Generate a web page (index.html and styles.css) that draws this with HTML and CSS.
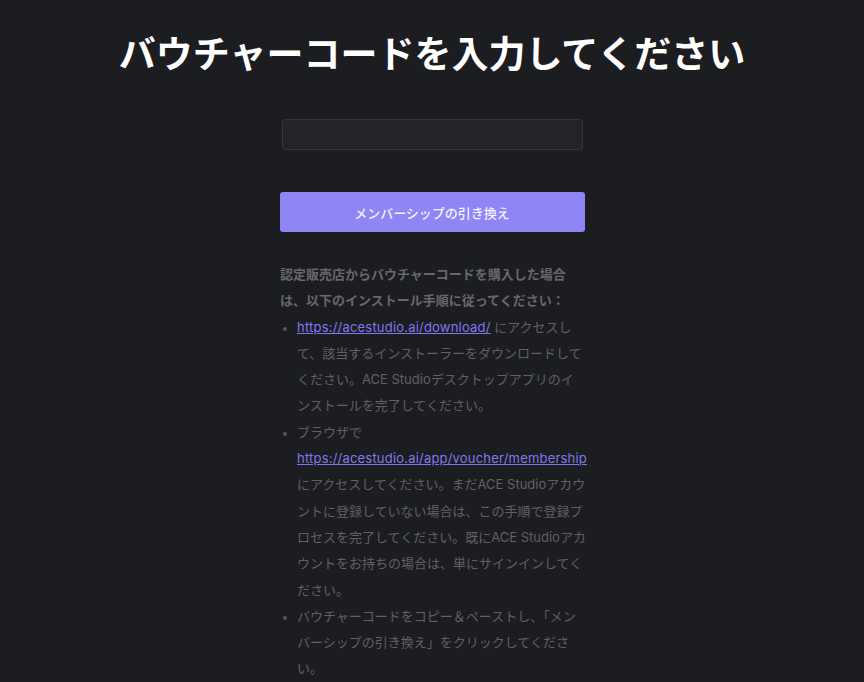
FILE: index.html
```html
<!DOCTYPE html>
<html lang="ja">
<head>
    <meta charset="UTF-8">
    <meta name="viewport" content="width=device-width, initial-scale=1.0">
    <title>ACE Studio - バウチャーコード</title>
    <link rel="stylesheet" href="styles.css">
</head>
<body>
    <div class="voucher-page">
        <h1 class="page-title">バウチャーコードを入力してください</h1>

        <form class="voucher-form">
            <input type="text" class="voucher-input" aria-label="バウチャーコード">
            <button type="submit" class="redeem-button">メンバーシップの引き換え</button>
        </form>

        <div class="instructions">
            <p class="instructions-title">認定販売店からバウチャーコードを購入した場合は、以下のインストール手順に従ってください：</p>
            <ul class="steps">
                <li><a href="#">https://acestudio.ai/download/</a> にアクセスして、該当するインストーラーをダウンロードしてください。ACE Studioデスクトップアプリのインストールを完了してください。</li>
                <li>ブラウザで <a href="#">https://acestudio.ai/app/voucher/membership</a> にアクセスしてください。まだACE Studioアカウントに登録していない場合は、この手順で登録プロセスを完了してください。既にACE Studioアカウントをお持ちの場合は、単にサインインしてください。</li>
                <li>バウチャーコードをコピー＆ペーストし、「メンバーシップの引き換え」をクリックしてください。</li>
            </ul>
        </div>
    </div>
</body>
</html>
```

FILE: styles.css
```css
/* Global Styles */
body {
    background-color: #1c1d21;
    color: #e8e8ea;
    font-family: Inter, "Noto Sans CJK JP", sans-serif;
    margin: 0;
    padding: 0;
}

.voucher-page {
    display: flex;
    flex-direction: column;
    align-items: center;
    padding-top: 30px;
}

.page-title {
    margin: 0;
    font-size: 37px;
    line-height: 50px;
    font-weight: bold;
    color: #ffffff;
    white-space: nowrap;
}

/* Form */
.voucher-form {
    display: flex;
    flex-direction: column;
    align-items: center;
    margin-top: 39px;
    width: 305px;
}

.voucher-input {
    width: 301px;
    height: 31px;
    box-sizing: border-box;
    border: 1px solid #34353a;
    border-radius: 3px;
    background-color: #232428;
    color: #e0e0e0;
    padding: 0 10px;
    outline: none;
}

.redeem-button {
    margin-top: 42px;
    width: 305px;
    height: 40px;
    border: none;
    border-radius: 3px;
    background-color: #8f86f5;
    color: #f4f2ff;
    font-family: inherit;
    font-size: 13px;
    font-weight: 500;
    cursor: pointer;
}

/* Instructions */
.instructions {
    width: 306px;
    margin-top: 29px;
    margin-left: 2px;
    font-size: 13px;
    line-height: 26.3px;
    color: #606065;
}

.instructions-title {
    margin: 0;
    font-weight: bold;
    color: #67676c;
}

.steps {
    margin: 0;
    padding-left: 17px;
}

.steps li::marker {
    color: #55555a;
    font-size: 11px;
}

.steps a {
    color: #8178f0;
    text-decoration: underline;
    letter-spacing: 0.2px;
}
```
